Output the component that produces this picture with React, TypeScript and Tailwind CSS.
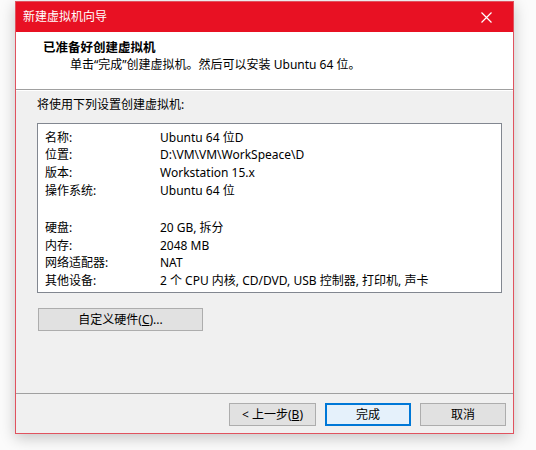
import React from "react";

// 向导最后一页：列出即将创建的虚拟机设置
const settings: [string, string][] = [
  ["名称:", "Ubuntu 64 位D"],
  ["位置:", "D:\\VM\\VM\\WorkSpeace\\D"],
  ["版本:", "Workstation 15.x"],
  ["操作系统:", "Ubuntu 64 位"],
];

const hardware: [string, string][] = [
  ["硬盘:", "20 GB, 拆分"],
  ["内存:", "2048 MB"],
  ["网络适配器:", "NAT"],
  ["其他设备:", "2 个 CPU 内核, CD/DVD, USB 控制器, 打印机, 声卡"],
];

function Row({ label, value }: { label: string; value: string }) {
  return (
    <div className="flex h-[17.6px] items-center">
      <span className="w-[115px] shrink-0">{label}</span>
      <span className="whitespace-nowrap">{value}</span>
    </div>
  );
}

function DlgButton({
  children,
  primary = false,
  className = "",
}: {
  children: React.ReactNode;
  primary?: boolean;
  className?: string;
}) {
  return (
    <button
      type="button"
      className={[
        "flex h-[23px] items-center justify-center text-[12px] text-black",
        primary
          ? "border-2 border-[#0078d7] bg-[#e5f1fb]"
          : "border border-[#adadad] bg-[#e1e1e1]",
        className,
      ].join(" ")}
    >
      {children}
    </button>
  );
}

export default function App() {
  return (
    <div
      className="h-[450px] w-[536px] overflow-hidden bg-[#fbfbfb] pt-[1px] pl-[15px]"
      style={{ fontFamily: '"Noto Sans", "Noto Sans CJK SC", sans-serif' }}
    >
      <div className="flex h-[433px] w-[499px] flex-col border border-[#e0535f] bg-[#f0f0f0] text-[12px] text-black shadow-[0_4px_14px_rgba(0,0,0,0.22)]">
        {/* Title bar */}
        <div className="flex h-[30px] shrink-0 items-center justify-between bg-[#e81123] pl-[7px] pr-[21px] text-white">
          <span className="text-[12px]">新建虚拟机向导</span>
          <svg width="11" height="11" viewBox="0 0 11 11" stroke="white" strokeWidth="1.2">
            <path d="M0.5 0.5L10.5 10.5M10.5 0.5L0.5 10.5" />
          </svg>
        </div>

        {/* Header */}
        <div className="h-[58px] shrink-0 border-b border-[#a0a0a0] bg-white pl-[27px] pt-[7px]">
          <div className="text-[12.5px] font-bold leading-[18px]">已准备好创建虚拟机</div>
          <div className="pl-[27px] leading-[16px]">单击“完成”创建虚拟机。然后可以安装 Ubuntu 64 位。</div>
        </div>

        {/* Body */}
        <div className="flex flex-1 flex-col border-t border-white pl-[21px] pr-[11px] pt-[5px]">
          <div className="leading-[18px]">将使用下列设置创建虚拟机:</div>
          <div className="mt-[9px] h-[170px] border border-[#828790] bg-white pl-[7px] pt-[5px]">
            {settings.map(([l, v]) => (
              <Row key={l} label={l} value={v} />
            ))}
            <div className="h-[20px]" />
            {hardware.map(([l, v]) => (
              <Row key={l} label={l} value={v} />
            ))}
          </div>
          <DlgButton className="mt-[15px] ml-[1px] w-[165px]">
            自定义硬件(<span className="underline">C</span>)...
          </DlgButton>
        </div>

        {/* Footer */}
        <div className="flex h-[40px] shrink-0 items-start justify-end gap-[9px] border-t border-[#a0a0a0] pr-[7px] pt-[9px]">
          <DlgButton className="w-[87px]">
            &lt; 上一步(<span className="underline">B</span>)
          </DlgButton>
          <DlgButton primary className="w-[86px]">
            完成
          </DlgButton>
          <DlgButton className="w-[86px]">取消</DlgButton>
        </div>
      </div>
    </div>
  );
}
